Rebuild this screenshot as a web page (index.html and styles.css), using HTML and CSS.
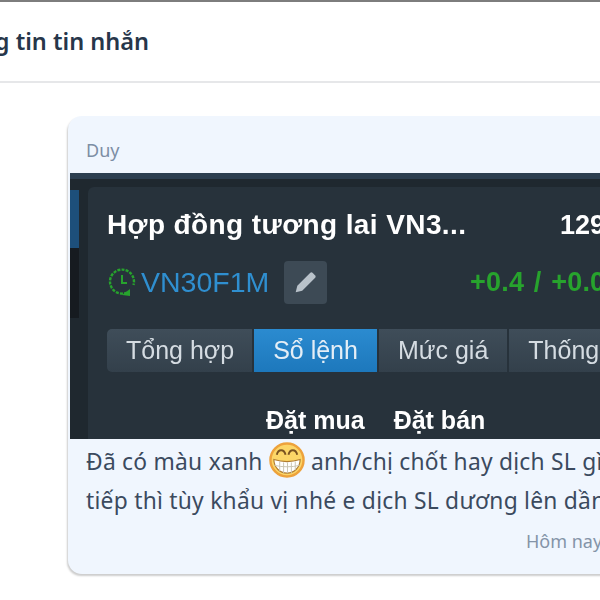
FILE: index.html
```html
<!DOCTYPE html>
<html lang="en">
<head>
  <meta charset="UTF-8">
  <title>Thông tin tin nhắn</title>
  <link rel="stylesheet" href="styles.css">
</head>
<body>
  <header class="top-bar">
    <h1 class="top-title">Thông tin tin nhắn</h1>
  </header>
  <main class="content">
    <div class="message">
      <div class="sender">Duy</div>
      <div class="shot">
        <div class="shot-stripe"></div>
        <div class="shot-body">
          <div class="shot-side">
            <div class="side-blue"></div>
            <div class="side-dark"></div>
          </div>
          <div class="panel">
            <div class="panel-row">
              <div class="contract-name">Hợp đồng tương lai VN3...</div>
              <div class="price">1290.5</div>
            </div>
            <div class="panel-row symbol-row">
              <svg class="clock" width="30" height="30" viewBox="0 0 30 30" fill="none" stroke="#27a32d" stroke-width="2.4">
                <path d="M20 25.500A12 12 0 1 1 26.500 18" stroke-dasharray="3 1.200"/>
                <path d="M15 8v8h5" stroke-width="2"/>
                <path d="M15 28l8-6v7z" fill="#27a32d" stroke="none"/>
              </svg>
              <span class="symbol">VN30F1M</span>
              <span class="edit-btn">
                <svg width="26" height="26" viewBox="0 0 24 24"><path d="M2.500 21.500l1.500-6L16 3.500a1.500 1.500 0 0 1 2 0l2.500 2.500a1.500 1.500 0 0 1 0 2L8.500 20z" fill="#b9c2ca"/></svg>
              </span>
              <span class="change">+0.4 / +0.03%</span>
            </div>
            <div class="tabs">
              <span class="tab tab-first">Tổng hợp</span>
              <span class="tab tab-active">Sổ lệnh</span>
              <span class="tab">Mức giá</span>
              <span class="tab">Thống kê</span>
            </div>
            <div class="order-heads">
              <span>Đặt mua</span>
              <span>Đặt bán</span>
            </div>
          </div>
        </div>
      </div>
      <p class="message-text">Đã có màu xanh <svg class="emoji" width="36" height="36" viewBox="0 0 37 37">
          <circle cx="18.500" cy="18.500" r="17" fill="#fcd667" stroke="#eda23c" stroke-width="2.500"/>
          <path d="M5 18c8 2.500 19 2.500 27 0c0 8-6 14-13.500 14S5 26 5 18z" fill="#fff" stroke="#b07c30" stroke-width="1.200"/>
          <path d="M5.500 24c8 2 18 2 26 0M11 20v10M15 21v11M19 21v11M23 21v11M27 20v9" fill="none" stroke="#c9c4b4" stroke-width="1"/>
          <path d="M8 13c1.500-6 7.500-6 9 0M20 13c1.500-6 7.500-6 9 0" fill="none" stroke="#7a5320" stroke-width="2"/>
        </svg> anh/chị chốt hay dịch SL gì thì<br>tiếp thì tùy khẩu vị nhé e dịch SL dương lên dần</p>
      <div class="message-time">Hôm nay 10:30</div>
    </div>
  </main>
</body>
</html>
```

FILE: styles.css
```css
html, body {
  height: 600px;
  overflow: hidden;
}
body {
  margin: 0;
  background-color: #fff;
  font-family: "Noto Sans", sans-serif;
}
.top-bar {
  height: 78px;
  border-top: 2px solid #7d7d7d;
  border-bottom: 2px solid #e6e7e9;
  display: flex;
  align-items: center;
  padding-bottom: 1px;
}
.top-title {
  margin: 0 0 0 -63px;
  font-size: 23.5px;
  font-weight: 600;
  color: #27364a;
  white-space: nowrap;
}
.content {
  padding: 33px 0 0 68px;
}
.message {
  width: 640px;
  height: 458px;
  background-color: #f0f6fe;
  border-radius: 14px;
  box-shadow: -1px 2px 2px rgba(0,0,0,0.2);
  padding-left: 2px;
  box-sizing: border-box;
}
.sender {
  height: 57px;
  padding: 21px 0 0 16px;
  box-sizing: border-box;
  font-size: 18px;
  line-height: 26px;
  color: #7d8ea5;
}
.shot {
  height: 266px;
  background-color: #1f282f;
  font-family: "Liberation Sans", sans-serif;
  overflow: hidden;
  filter: blur(0.5px);
}
.shot-stripe {
  height: 6px;
  background-color: #2d3f50;
}
.shot-body {
  display: flex;
  padding-top: 8px;
}
.shot-side {
  width: 18px;
  padding-top: 3px;
  flex-shrink: 0;
}
.side-blue {
  width: 9px;
  height: 58px;
  background-color: #1d4f7a;
}
.side-dark {
  width: 9px;
  height: 70px;
  background-color: #161b20;
}
.panel {
  flex: 1;
  height: 252px;
  background-color: #27323b;
  border-radius: 6px 0 0 0;
  padding: 22px 0 0 19px;
  color: #fff;
  white-space: nowrap;
}
.panel-row {
  display: flex;
  align-items: center;
}
.contract-name {
  width: 453px;
  font-size: 28px;
  line-height: 32px;
  font-weight: bold;
  letter-spacing: 0.4px;
}
.price {
  font-size: 27px;
  line-height: 32px;
  font-weight: bold;
}
.symbol-row {
  margin-top: 19px;
  height: 44px;
}
.clock {
  margin-right: 4px;
}
.symbol {
  font-size: 28.5px;
  color: #2f8fd0;
  width: 143px;
}
.edit-btn {
  width: 43px;
  height: 43px;
  border-radius: 4px;
  background-color: #3d4a55;
  display: flex;
  align-items: center;
  justify-content: center;
}
.change {
  margin-left: 143px;
  font-size: 27px;
  font-weight: bold;
  letter-spacing: 0.2px;
  word-spacing: 2px;
  color: #27a32d;
}
.tabs {
  display: flex;
  gap: 2px;
  margin-top: 25px;
}
.tab {
  height: 43px;
  padding: 0 19px;
  display: flex;
  align-items: center;
  font-size: 25px;
  color: #d5dce2;
  background: linear-gradient(#3f4d59, #33404b);
}
.tab-first {
  border-radius: 5px 0 0 5px;
  padding-right: 18px;
}
.tab-active {
  color: #e4eef6;
  background: linear-gradient(#2b8bd0, #1d78bc);
}
.order-heads {
  display: flex;
  gap: 29px;
  margin: 32px 0 0 159px;
  font-size: 25px;
  line-height: 32px;
  font-weight: bold;
}
.message-text {
  margin: 0;
  padding: 3px 0 0 16px;
  font-size: 22.8px;
  letter-spacing: 0.25px;
  line-height: 39px;
  color: #3b4a5e;
  white-space: nowrap;
}
.emoji {
  vertical-align: -8px;
}
.message-time {
  margin: 9px 0 0 456px;
  font-size: 18px;
  color: #8494a8;
  white-space: nowrap;
}
```
